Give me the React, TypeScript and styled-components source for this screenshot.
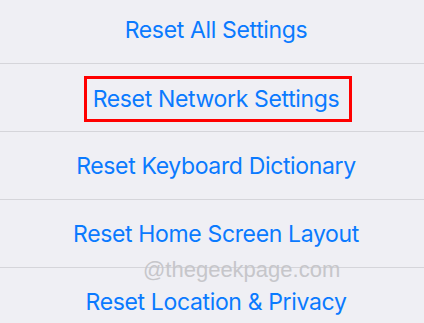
import React from "react";
import styled, { createGlobalStyle } from "styled-components";

const items = [
  "Reset All Settings",
  "Reset Network Settings",
  "Reset Keyboard Dictionary",
  "Reset Home Screen Layout",
  "Reset Location & Privacy",
];

const App = () => {
  return (
    <Page>
      <GlobalStyle />
      <List>
        {items.map((label, i) => (
          <Row key={label}>
            {i === 1 ? <Highlight>{label}</Highlight> : <Label>{label}</Label>}
          </Row>
        ))}
      </List>
      <Watermark>@thegeekpage.com</Watermark>
    </Page>
  );
};

export default App;

const GlobalStyle = createGlobalStyle`
  html, body {
    margin: 0;
    padding: 0;
    background: #efeff4;
  }
`;

const Page = styled.div`
  position: relative;
  width: 424px;
  height: 323px;
  overflow: hidden;
  background: #efeff4;
  font-family: Inter, "Liberation Sans", sans-serif;
`;

const List = styled.div`
  display: flex;
  flex-direction: column;
  margin-top: -4px;
`;

const Row = styled.div`
  height: 67px;
  padding-left: 8px;
  border-bottom: 1px solid #d5d5da;
  display: flex;
  align-items: center;
  justify-content: center;
`;

const Label = styled.span`
  color: #0a7aff;
  font-size: 23px;
  line-height: 28px;
  letter-spacing: -0.35px;
`;

const Highlight = styled(Label)`
  border: 3px solid #ff0000;
  padding: 6px 10px 6px 6px;
  margin-top: 2px;
  margin-left: 4px;
`;

const Watermark = styled.div`
  position: absolute;
  left: 143px;
  top: 258px;
  color: #c6c6ca;
  font-size: 22px;
  line-height: 24px;
  font-family: "Liberation Sans", Arial, sans-serif;
`;
